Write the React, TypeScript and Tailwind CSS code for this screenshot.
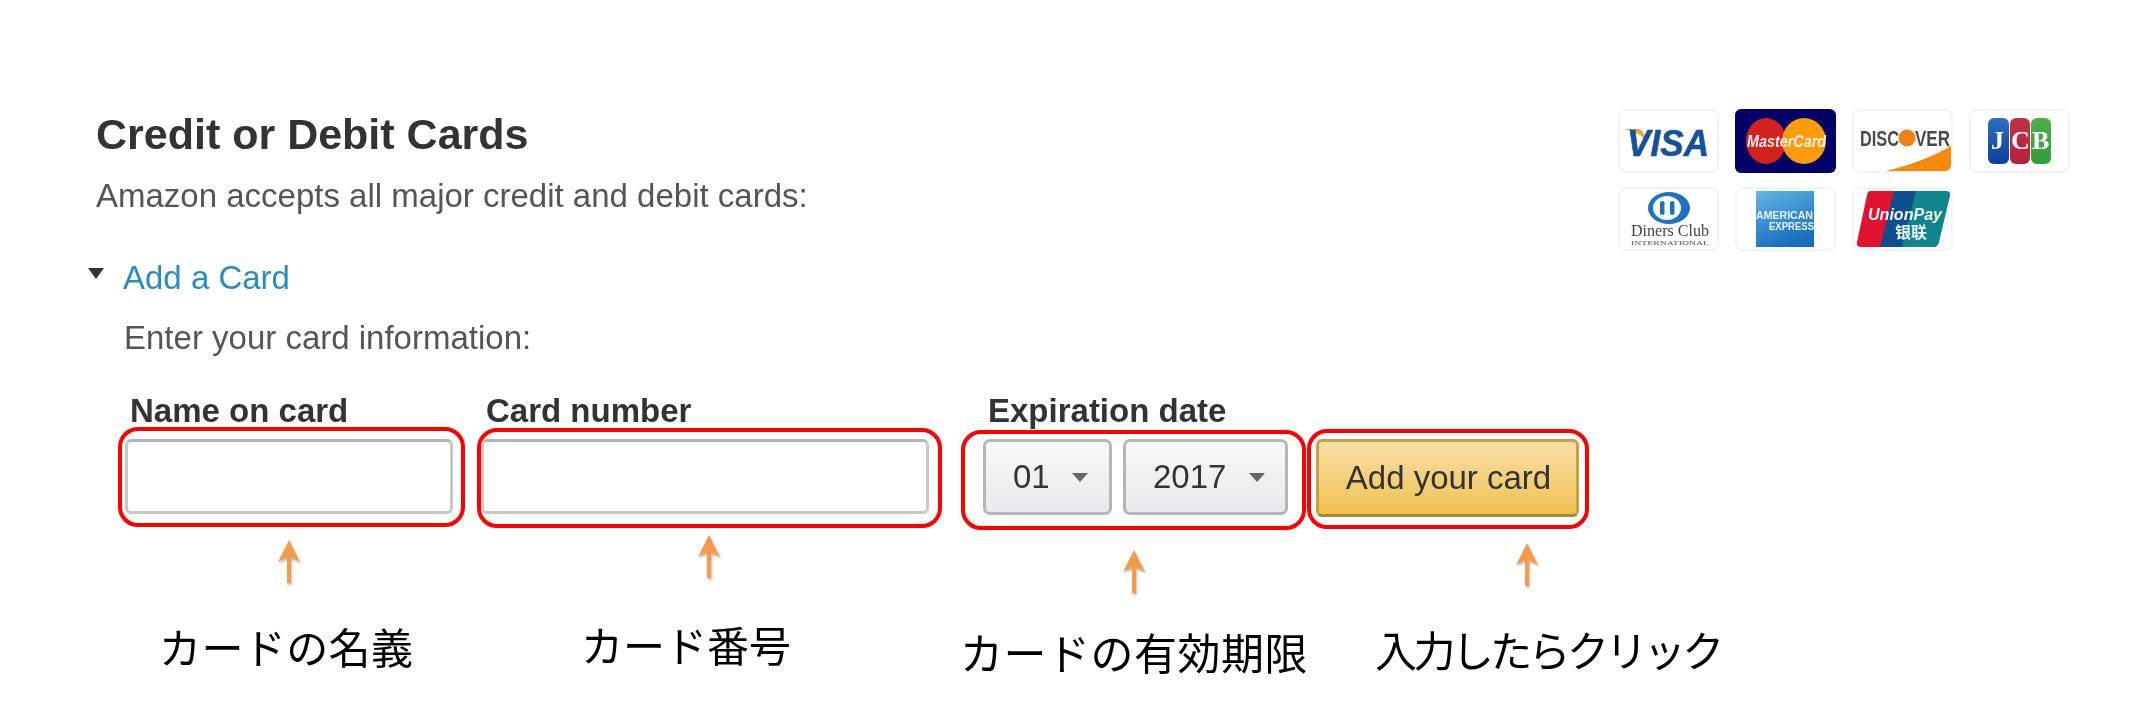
import React from "react";

const cardFrame = "h-[64px] w-[101px] rounded-[8px] border-2 border-[#f3f3f3] bg-white overflow-hidden";

function Visa() {
  return (
    <div className={cardFrame}>
      <svg viewBox="0 0 97 60" className="h-full w-full blur-[0.6px]">
        <path d="M4 18 L19 18 Q24 20 26 30 Q20 21 4 18 Z" fill="#f4a51c" />
        <text x="7" y="45" fontFamily="Liberation Sans" fontWeight="700" fontStyle="italic" fontSize="37" fill="#17519c" stroke="#17519c" strokeWidth="0.6" textLength="82" lengthAdjust="spacingAndGlyphs">VISA</text>
      </svg>
    </div>
  );
}

function MasterCard() {
  return (
    <div className="h-[64px] w-[101px] rounded-[6px] bg-[#000066] overflow-hidden">
      <svg viewBox="0 0 101 64" className="h-full w-full blur-[0.6px]">
        <ellipse cx="31" cy="32" rx="20" ry="23" fill="#d3211c" />
        <ellipse cx="69" cy="32" rx="22" ry="23" fill="#fb9d0a" />
        <text x="12" y="38" fontFamily="Liberation Sans" fontWeight="700" fontStyle="italic" fontSize="16" fill="#f4eef2" textLength="79" lengthAdjust="spacingAndGlyphs">MasterCard</text>
      </svg>
    </div>
  );
}

function Discover() {
  return (
    <div className={cardFrame}>
      <svg viewBox="0 0 97 60" className="h-full w-full blur-[0.6px]">
        <path d="M32 60 Q72 50 97 35 L97 60 Z" fill="#f68b0a" />
        <circle cx="53" cy="27" r="8.5" fill="#f0811c" />
        <text x="6" y="35" fontFamily="Liberation Sans" fontWeight="700" fontSize="22" fill="#4a4a4c" textLength="39" lengthAdjust="spacingAndGlyphs">DISC</text>
        <text x="45.5" y="35" fontFamily="Liberation Sans" fontWeight="700" fontSize="22" fill="#f0811c" textLength="15" lengthAdjust="spacingAndGlyphs">O</text>
        <text x="61" y="35" fontFamily="Liberation Sans" fontWeight="700" fontSize="22" fill="#4a4a4c" textLength="35" lengthAdjust="spacingAndGlyphs">VER</text>
      </svg>
    </div>
  );
}

function Jcb() {
  return (
    <div className={cardFrame}>
      <svg viewBox="0 0 97 60" className="h-full w-full blur-[0.6px]">
        <defs>
          <linearGradient id="jb" x1="0" y1="0" x2="0" y2="1"><stop offset="0" stopColor="#2f6fbd" /><stop offset="1" stopColor="#0d3f9e" /></linearGradient>
          <linearGradient id="jr" x1="0" y1="0" x2="0" y2="1"><stop offset="0" stopColor="#c3304a" /><stop offset="1" stopColor="#b3223a" /></linearGradient>
          <linearGradient id="jg" x1="0" y1="0" x2="0" y2="1"><stop offset="0" stopColor="#50ae49" /><stop offset="1" stopColor="#2d9e3a" /></linearGradient>
        </defs>
        <rect x="17" y="7" width="21" height="46" rx="6" fill="url(#jb)" />
        <rect x="39" y="7" width="20" height="46" rx="6" fill="url(#jr)" />
        <rect x="60" y="7" width="20" height="46" rx="6" fill="url(#jg)" />
        <text x="20" y="38" fontFamily="Liberation Serif" fontWeight="700" fontSize="26" fill="#fff">J</text>
        <text x="40" y="38" fontFamily="Liberation Serif" fontWeight="700" fontSize="26" fill="#fff">C</text>
        <text x="61" y="38" fontFamily="Liberation Serif" fontWeight="700" fontSize="26" fill="#fff">B</text>
      </svg>
    </div>
  );
}

function Diners() {
  return (
    <div className={cardFrame}>
      <svg viewBox="0 0 97 60" className="h-full w-full blur-[0.6px]">
        <ellipse cx="49" cy="19" rx="21" ry="16" fill="#1c74ba" />
        <ellipse cx="47" cy="19" rx="14" ry="12" fill="#fff" />
        <rect x="40" y="12" width="4.5" height="14" rx="2" fill="#1c74ba" />
        <rect x="50" y="12" width="4.5" height="14" rx="2" fill="#1c74ba" />
        <text x="11" y="47" fontFamily="Liberation Serif" fontSize="17" fill="#444" textLength="78" lengthAdjust="spacingAndGlyphs">Diners Club</text>
        <text x="11" y="56" fontFamily="Liberation Serif" fontSize="7" fill="#555" textLength="78" lengthAdjust="spacingAndGlyphs">INTERNATIONAL</text>
      </svg>
    </div>
  );
}

function Amex() {
  return (
    <div className={cardFrame}>
      <svg viewBox="0 0 97 60" className="h-full w-full blur-[0.6px]">
        <defs>
          <linearGradient id="ax" x1="0" y1="0" x2="0.4" y2="1"><stop offset="0" stopColor="#62b6e8" /><stop offset="1" stopColor="#1a6fbd" /></linearGradient>
        </defs>
        <rect x="19" y="2" width="58" height="56" fill="url(#ax)" />
        <text x="19" y="30" fontFamily="Liberation Sans" fontWeight="700" fontSize="11" fill="#e8f3fb" textLength="57" lengthAdjust="spacingAndGlyphs">AMERICAN</text>
        <text x="32" y="41" fontFamily="Liberation Sans" fontWeight="700" fontSize="11" fill="#e8f3fb" textLength="45" lengthAdjust="spacingAndGlyphs">EXPRESS</text>
      </svg>
    </div>
  );
}

function UnionPay() {
  return (
    <div className={cardFrame}>
      <svg viewBox="0 0 97 60" className="h-full w-full blur-[0.6px]">
        <path d="M16 2 H42 L28 58 H7 Q2 58 3 53 L13 6 Q14 2 16 2 Z" fill="#e1122f" />
        <path d="M40 2 H64 L50 58 H26 Z" fill="#0c4f8f" />
        <path d="M62 2 H92 Q97 2 96 7 L85 53 Q84 58 80 58 H48 Z" fill="#0f868c" />
        <text x="14" y="31" fontFamily="Liberation Sans" fontWeight="700" fontStyle="italic" fontSize="16" fill="#f3f7f8" textLength="74" lengthAdjust="spacingAndGlyphs">UnionPay</text>
        <text x="41" y="49" fontFamily="Noto Sans CJK SC" fontWeight="700" fontSize="16" fill="#eef5f6">银联</text>
      </svg>
    </div>
  );
}

function Arrow() {
  return (
    <svg viewBox="0 0 24 44" className="h-[44px] w-[24px] drop-shadow-[1px_2px_1px_rgba(0,0,0,0.25)]">
      <path d="M12 0 L23 22 Q16 18 14 18 L14 43 L10 43 L10 18 Q8 18 1 22 Z" fill="#f79a4b" />
    </svg>
  );
}

function Caret() {
  return (
    <svg viewBox="0 0 16 9" className="h-[9px] w-[16px] shrink-0">
      <path d="M0 0 H16 L8 9 Z" fill="#666" />
    </svg>
  );
}

function Caption({ children, className }: { children: React.ReactNode; className: string }) {
  return (
    <div className={`whitespace-nowrap leading-[48px] text-black [font-family:'Noto_Sans_CJK_JP',sans-serif] ${className}`}>
      {children}
    </div>
  );
}

const label = "h-[34px] text-[33px] leading-[36px] font-bold text-[#333] whitespace-nowrap";
const ring = "rounded-[20px] border-4 border-[#ff0000] bg-white";
const field = "rounded-[6px] border-[3px] border-[#c8c8c8] border-t-[#b4b4b4] bg-white h-[75px]";
const select = "h-[76px] rounded-[7px] border-[3px] border-[#b3b6bb] bg-linear-to-b from-[#f7f8fa] to-[#e7e9ec] flex items-center text-[33px] leading-[36px] text-[#333]";

export default function App() {
  return (
    <div className="relative h-[716px] w-[2139px] overflow-hidden bg-white pt-[110px] text-[33px] blur-[0.4px] [font-family:'Liberation_Sans',Arial,sans-serif]">
      <div className="flex items-start justify-between pr-[68px] pl-[96px]">
        <div>
          <h1 className="text-[43px] leading-[48px] font-bold text-[#333]">Credit or Debit Cards</h1>
          <p className="mt-[20px] leading-[36px] text-[#555]">Amazon accepts all major credit and debit cards:</p>
        </div>
        <div className="-mt-[1px] mr-[1px] grid grid-cols-[repeat(4,101px)] gap-x-[16px] gap-y-[14px]">
          <Visa />
          <MasterCard />
          <Discover />
          <Jcb />
          <Diners />
          <Amex />
          <UnionPay />
        </div>
      </div>

      <div className="mt-[9px] ml-[88px]">
        <div className="flex items-center leading-[36px]">
          <svg viewBox="0 0 16 11" className="mr-[19px] -mt-[9px] h-[11px] w-[16px]">
            <path d="M0 0 H16 L8 11 Z" fill="#333" />
          </svg>
          <span className="text-[#2b8dbf]">Add a Card</span>
        </div>
        <p className="mt-[24px] ml-[36px] leading-[36px] text-[#555]">Enter your card information:</p>
      </div>

      <div className="mt-[37px] flex items-start pl-[118px]">
        <div className="w-[347px]">
          <div className={`${label} ml-[12px]`}>Name on card</div>
          <div className={`${ring} h-[100px] pt-[8px] pr-[8px] pl-[3px]`}>
            <div className={`${field}`} />
          </div>
          <div className="mt-[13px] ml-[159px]"><Arrow /></div>
          <Caption className="mt-[38px] ml-[41px] text-[42px] tracking-[0.4px]">カードの名義</Caption>
        </div>

        <div className="ml-[12px] w-[465px]">
          <div className={`${label} ml-[9px]`}>Card number</div>
          <div className={`${ring} mt-[1px] h-[100px] pt-[7px] pr-[9px] pl-[0px]`}>
            <div className={`${field}`} />
          </div>
          <div className="mt-[7px] ml-[220px]"><Arrow /></div>
          <Caption className="mt-[41px] ml-[104px] text-[42px]">カード番号</Caption>
        </div>

        <div className="ml-[19px] w-[345px]">
          <div className={`${label} ml-[27px]`}>Expiration date</div>
          <div className={`${ring} mt-[3px] flex h-[100px] gap-[11px] pt-[5px] pl-[18px]`}>
            <div className={`${select} w-[129px] pl-[27px]`}>
              <span>01</span>
              <span className="ml-[22px]"><Caret /></span>
            </div>
            <div className={`${select} w-[165px] pl-[27px]`}>
              <span>2017</span>
              <span className="ml-[23px]"><Caret /></span>
            </div>
          </div>
          <div className="mt-[20px] ml-[161px]"><Arrow /></div>
          <Caption className="mt-[33px] -ml-[1px] text-[43px] tracking-[0.5px]">カードの有効期限</Caption>
        </div>

        <div className="ml-[1px] w-[282px] pt-[34px]">
          <div className={`${ring} mt-[2px] h-[100px] pt-[6px] pl-[5px]`}>
            <button className="h-[78px] w-[263px] rounded-[6px] border-[3px] border-[#c4a24a] border-b-[#a88734] bg-linear-to-b from-[#f7dfa5] to-[#f0c14b] pl-[2px] text-[33px] leading-[36px] text-[#333]">
              Add your card
            </button>
          </div>
          <div className="mt-[14px] ml-[208px]"><Arrow /></div>
          <Caption className="mt-[38px] ml-[68px] text-[42px] tracking-[-3.6px]">入力したらクリック</Caption>
        </div>
      </div>
    </div>
  );
}
